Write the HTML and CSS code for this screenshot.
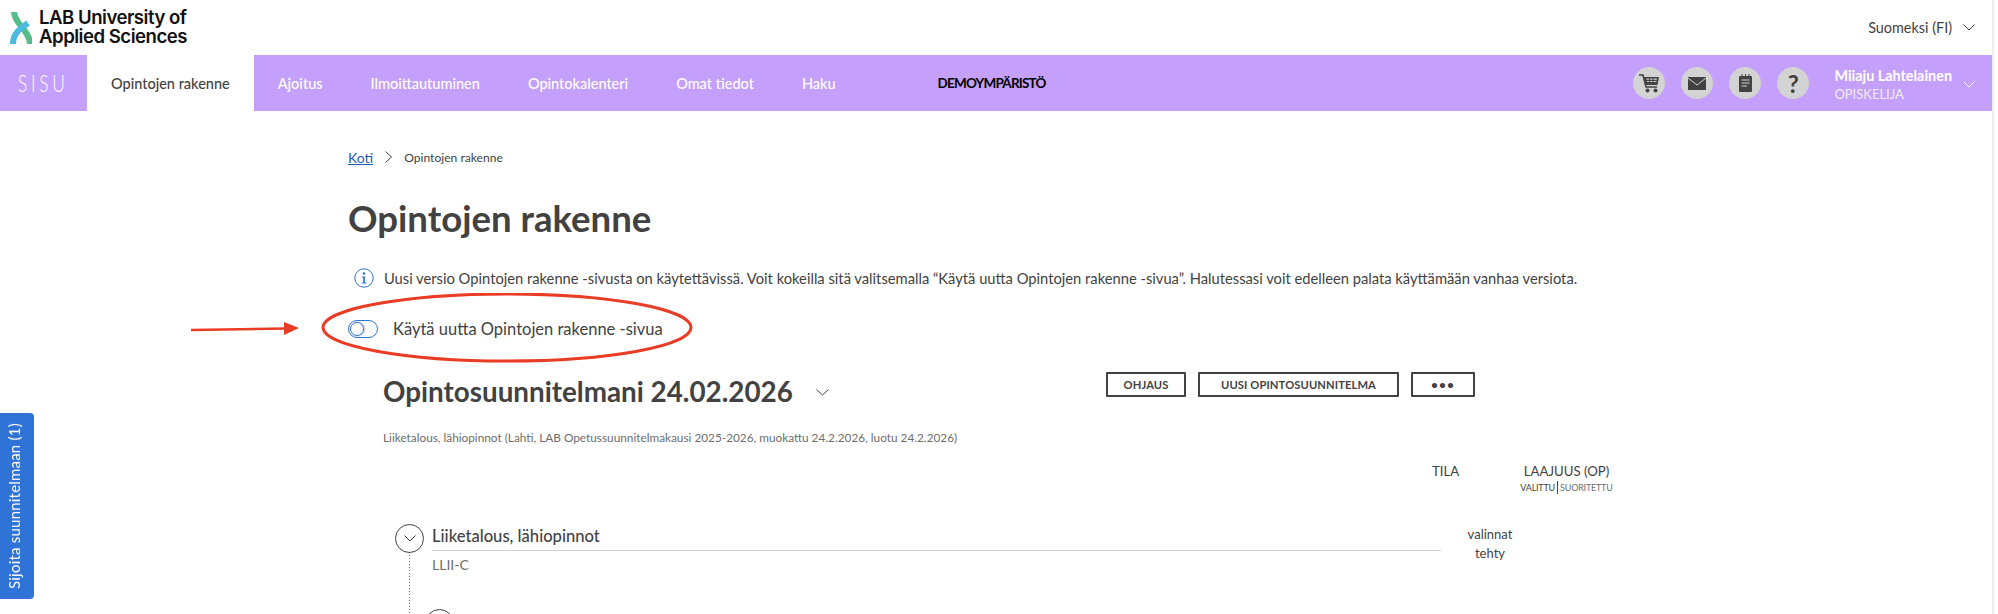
FILE: index.html
```html
<!DOCTYPE html>
<html lang="fi">
  <head>
    <meta charset="UTF-8" />
    <title>Opintojen rakenne</title>
    <link rel="stylesheet" href="styles.css">
  </head>
  <body>
    <header class="Topbar">
      <div class="Logo">
        <svg class="LogoMark" width="22" height="34" viewBox="0 0 22 34">
          <path d="M4 1 C4 12 20 20 20 33" fill="none" stroke="#55bd8c" stroke-width="6"/>
          <path d="M18 12 C10 18 3 22 3 33" fill="none" stroke="#4cb9e0" stroke-width="6"/>
        </svg>
        <div class="LogoText">LAB University of<br>Applied Sciences</div>
      </div>
      <div class="Language">
        <span>Suomeksi (FI)</span>
        <svg class="Chevron" width="12" height="7" viewBox="0 0 12 7"><path d="M0.5 0.5 L6 6 L11.5 0.5" fill="none" stroke="#424242"/></svg>
      </div>
    </header>

    <nav class="Mainnav">
      <div class="Brand"><span class="BrandText">SISU</span></div>
      <ul class="Tabs">
        <li class="Tab Active">Opintojen rakenne</li>
        <li class="Tab">Ajoitus</li>
        <li class="Tab">Ilmoittautuminen</li>
        <li class="Tab">Opintokalenteri</li>
        <li class="Tab">Omat tiedot</li>
        <li class="Tab">Haku</li>
      </ul>
      <div class="Demo">DEMOYMPÄRISTÖ</div>
      <div class="Tools">
        <span class="Round">
          <svg width="22" height="22" viewBox="0 0 22 22" fill="#424242">
            <path d="M1 3 H5 L8 15 H19" fill="none" stroke="#424242" stroke-width="1.6"/>
            <path d="M6 5 H21 L19.5 13 H8 Z M8.5 6.5 V7.8 H11 V6.5 Z M12 6.5 V7.8 H14.5 V6.5 Z M15.5 6.5 V7.8 H18.8 V6.5 Z M9 9 V10 H11 V9 Z M12 9 V10 H14.5 V9 Z M15.5 9 V10 H18.4 V9 Z" fill-rule="evenodd"/>
            <circle cx="9.5" cy="18.5" r="2"/>
            <circle cx="17.5" cy="18.5" r="2"/>
          </svg>
        </span>
        <span class="Round">
          <svg width="18" height="13" viewBox="0 0 18 13">
            <rect width="18" height="13" fill="#424242"/>
            <path d="M0 1 L9 8 L18 1" fill="none" stroke="#d3d3d3" stroke-width="1"/>
          </svg>
        </span>
        <span class="Round">
          <svg width="13" height="18" viewBox="0 0 13 18" fill="#424242">
            <rect y="2" width="13" height="16" rx="1"/>
            <path d="M3 0 V2 M6.500 0 V2 M10 0 V2" stroke="#424242"/>
            <path d="M2.500 6 H10.500 M2.500 9 H10.500 M2.500 12 H8" stroke="#d3d3d3"/>
          </svg>
        </span>
        <span class="Round Help">?</span>
      </div>
      <div class="User">
        <div>
          <div class="UserName">Miiaju Lahtelainen</div>
          <div class="UserRole">OPISKELIJA</div>
        </div>
        <svg class="Chevron" width="12" height="7" viewBox="0 0 12 7"><path d="M0.5 0.5 L6 6 L11.5 0.5" fill="none" stroke="#fff"/></svg>
      </div>
    </nav>

    <main class="Page">
      <div class="Crumbs">
        <a class="Home" href="#">Koti</a>
        <svg width="7" height="12" viewBox="0 0 7 12"><path d="M0.5 0.5 L6.500 6 L0.5 11.5" fill="none" stroke="#424242"/></svg>
        <span>Opintojen rakenne</span>
      </div>
      <h1 class="Title">Opintojen rakenne</h1>
      <p class="Notice">
        <svg width="20" height="20" viewBox="0 0 20 20">
          <circle cx="10" cy="10" r="9.2" fill="none" stroke="#2f73d6" stroke-width="1"/>
          <circle cx="10" cy="5.500" r="1.300" fill="#2f73d6"/>
          <path d="M7.800 8.500 H11 V14.500 H12.500 V15.500 H7.800 V14.500 H9.300 V9.500 H7.800 Z" fill="#2f73d6"/>
        </svg>
        <span>Uusi versio Opintojen rakenne -sivusta on käytettävissä. Voit kokeilla sitä valitsemalla “Käytä uutta Opintojen rakenne -sivua”. Halutessasi voit edelleen palata käyttämään vanhaa versiota.</span>
      </p>
      <div class="SwitchRow">
        <span class="Switch"><span class="Knob"></span></span>
        <span>Käytä uutta Opintojen rakenne -sivua</span>
        <svg class="Markup" width="530" height="80" viewBox="0 0 530 80">
          <ellipse cx="337" cy="34.500" rx="184" ry="33.500" fill="none" stroke="#ea3b24" stroke-width="3"/>
          <path d="M21 37 L116 35.500" fill="none" stroke="#ea3b24" stroke-width="2.500"/>
          <path d="M114 29 L129 35 L114 42 Z" fill="#ea3b24"/>
        </svg>
      </div>

      <section class="Plan">
        <div class="PlanHead">
          <h2 class="PlanName">Opintosuunnitelmani 24.02.2026</h2>
          <svg class="PlanChevron" width="13" height="7" viewBox="0 0 13 7"><path d="M0.5 0.5 L6.500 6 L12.500 0.5" fill="none" stroke="#424242"/></svg>
          <div class="Actions">
            <button class="Btn Guide">OHJAUS</button>
            <button class="Btn New">UUSI OPINTOSUUNNITELMA</button>
            <button class="Btn Dots">•••</button>
          </div>
        </div>
        <p class="PlanInfo">Liiketalous, lähiopinnot (Lahti, LAB Opetussuunnitelmakausi 2025-2026, muokattu 24.2.2026, luotu 24.2.2026)</p>

        <div class="Columns">
          <span class="ColState">TILA</span>
          <div class="ColScope">
            <div>LAAJUUS (OP)</div>
            <div class="ColSub"><span class="Picked">VALITTU</span><span class="Done">SUORITETTU</span></div>
          </div>
        </div>

        <div class="Tree">
          <div class="Node">
            <span class="Toggle">
              <svg width="12" height="7" viewBox="0 0 12 7"><path d="M0.5 0.5 L6 6 L11.5 0.5" fill="none" stroke="#424242"/></svg>
            </span>
            <div class="NodeBody">
              <div class="NodeName">Liiketalous, lähiopinnot</div>
              <div class="NodeCode">LLII-C</div>
            </div>
            <div class="NodeState">valinnat<br>tehty</div>
          </div>
          <div class="Node Child">
            <span class="Toggle"></span>
            <div class="NodeBody">
              <div class="NodeName">Opinnot ja valinnat</div>
            </div>
            <div class="NodeState">valinnat</div>
            <div class="NodeScope">210</div>
          </div>
        </div>
      </section>
    </main>

    <button class="Place">Sijoita suunnitelmaan (1)</button>
  </body>
</html>
```

FILE: styles.css
```css
* {
  box-sizing: border-box;
}
html,
body {
  height: 614px;
  overflow: hidden;
}
body {
  margin: 0;
  width: 1994px;
  border-right: 2px solid #eee;
  font-family: "Lato", "Noto Sans", sans-serif;
  color: #424242;
  background: #fff;
  font-size: 14px;
}
.Topbar {
  display: flex;
  justify-content: space-between;
  align-items: center;
  height: 55px;
  padding: 0 17px 0 10px;
}
.Logo {
  display: flex;
  align-items: center;
  gap: 7px;
}
.LogoText {
  margin-top: -2px;
  font-family: "Inter", sans-serif;
  font-weight: 600;
  font-size: 18.6px;
  line-height: 19px;
  letter-spacing: -0.5px;
  color: #111;
}
.Language {
  display: flex;
  align-items: center;
  gap: 11px;
  font-size: 14.4px;
}
.Mainnav {
  display: flex;
  align-items: center;
  height: 56px;
  background-color: #c49ffb;
  padding-right: 17px;
}
.Brand {
  width: 87px;
  padding-left: 18px;
  color: #fff;
  font-size: 23px;
  font-weight: 300;
  letter-spacing: 5px;
}
.BrandText {
  display: block;
  transform: scaleX(0.75);
  transform-origin: left center;
}
.Tabs {
  display: flex;
  list-style-type: none;
  margin: 0;
  padding: 0;
  height: 100%;
}
.Tab {
  display: flex;
  align-items: center;
  padding: 0 24px;
  color: #fff;
  font-size: 14.5px;
  font-weight: 500;
}
.Active {
  background-color: #fff;
  color: #424242;
}
.Demo {
  margin-left: 78px;
  color: #000;
  font-size: 13.5px;
  font-weight: 700;
  letter-spacing: -0.8px;
}
.Tools {
  display: flex;
  gap: 16px;
  margin-left: auto;
}
.Round {
  display: flex;
  align-items: center;
  justify-content: center;
  width: 32px;
  height: 32px;
  border-radius: 50%;
  background-color: #d3d3d3;
}
.Help {
  font-size: 24px;
  font-weight: 700;
}
.User {
  display: flex;
  align-items: center;
  gap: 11px;
  margin-left: 25px;
  padding-top: 2px;
  color: #fff;
}
.UserName {
  font-size: 14.4px;
  font-weight: 700;
  line-height: 20px;
}
.UserRole {
  font-size: 13px;
  line-height: 16px;
  color: #eee;
}
.Chevron {
  display: block;
}
.Page {
  width: 1296px;
  margin-left: 348px;
}
.Crumbs {
  display: flex;
  align-items: center;
  gap: 12px;
  margin-top: 36px;
  height: 20px;
  font-size: 12.1px;
}
.Home {
  color: #1c5cb8;
  font-size: 14px;
}
.Title {
  margin: 29px 0 0;
  font-size: 36.6px;
  line-height: 44px;
  font-weight: 700;
}
.Notice {
  display: flex;
  align-items: center;
  gap: 10px;
  margin: 28px 0 0 6px;
  height: 20px;
  font-size: 14.72px;
}
.SwitchRow {
  position: relative;
  display: flex;
  align-items: center;
  gap: 15px;
  margin-top: 31px;
  height: 20px;
  font-size: 16.5px;
}
.Switch {
  position: relative;
  display: block;
  width: 30px;
  height: 18px;
  border: 1px solid #2f73d6;
  border-radius: 9px;
}
.Knob {
  position: absolute;
  top: 1px;
  left: 1px;
  width: 14px;
  height: 14px;
  border: 1px solid #2f73d6;
  border-radius: 50%;
  box-shadow: 1px 0 2px rgba(0, 0, 0, 0.3);
}
.Markup {
  position: absolute;
  top: -26px;
  left: -178px;
}
.Plan {
  padding-left: 35px;
}
.PlanHead {
  display: flex;
  align-items: center;
  width: 1092px;
  margin-top: 33px;
}
.PlanName {
  margin: 0;
  font-size: 27.8px;
  line-height: 40px;
  font-weight: 700;
}
.PlanChevron {
  margin-left: 23px;
}
.Actions {
  display: flex;
  gap: 12px;
  margin: -16px 0 0 auto;
}
.Btn {
  height: 25px;
  padding: 0;
  border: 2px solid #424242;
  border-radius: 1px;
  background: #fff;
  color: #424242;
  font-family: inherit;
  font-size: 11.2px;
  font-weight: 700;
  letter-spacing: 0.1px;
}
.Guide {
  width: 80px;
}
.New {
  width: 201px;
}
.Dots {
  width: 64px;
  font-size: 12px;
  letter-spacing: 1px;
}
.PlanInfo {
  margin: 18px 0 0;
  font-size: 11.8px;
  line-height: 16px;
  color: #6e6e6e;
}
.Columns {
  display: flex;
  margin-top: 15px;
  padding-left: 1049px;
}
.ColState {
  width: 86px;
  font-size: 13.2px;
  line-height: 20px;
}
.ColScope {
  width: 97px;
  font-size: 13.2px;
  line-height: 20px;
  text-align: center;
  white-space: nowrap;
}
.ColSub {
  display: flex;
  justify-content: center;
  font-size: 9px;
  letter-spacing: -0.2px;
  line-height: 13px;
}
.Picked {
  padding-right: 2px;
  border-right: 1px solid #424242;
}
.Done {
  padding-left: 2px;
  color: #6e6e6e;
}
.Tree {
  margin-top: 30px;
  padding-left: 12px;
}
.Node {
  position: relative;
  display: flex;
  height: 85px;
}
.Node::before {
  content: "";
  position: absolute;
  top: 28px;
  bottom: -10px;
  left: 14px;
  width: 1px;
  background: repeating-linear-gradient(to bottom, #777 0, #777 1px, transparent 1px, transparent 3px);
}
.Toggle {
  position: relative;
  display: flex;
  align-items: center;
  justify-content: center;
  flex: none;
  width: 29px;
  height: 29px;
  border: 1px solid #424242;
  border-radius: 50%;
  background: #fff;
}
.NodeBody {
  width: 1009px;
  margin-left: 8px;
}
.NodeName {
  height: 27px;
  border-bottom: 1px solid #d3d3d3;
  font-size: 16.6px;
  font-weight: 500;
  line-height: 24px;
}
.NodeCode {
  margin-top: 4px;
  line-height: 20px;
  color: #6e6e6e;
}
.NodeState {
  width: 78px;
  margin-left: 10px;
  margin-top: 1px;
  font-size: 13px;
  line-height: 19px;
  text-align: center;
}
.Child {
  margin-left: 30px;
}
.Child::before {
  display: none;
}
.Child .NodeBody {
  width: 979px;
}
.Child .NodeName {
  border-bottom: 0;
}
.NodeScope {
  margin-left: 31px;
  margin-top: 1px;
}
.Place {
  position: fixed;
  left: 0;
  top: 413px;
  width: 34px;
  height: 186px;
  padding: 0 0 0 6px;
  border: 0;
  border-radius: 4px 0 0 4px;
  background-color: #2f73d6;
  color: #fff;
  font-family: inherit;
  font-size: 14.8px;
  letter-spacing: 0.3px;
  writing-mode: vertical-rl;
  transform: rotate(180deg);
  text-align: center;
}
```
